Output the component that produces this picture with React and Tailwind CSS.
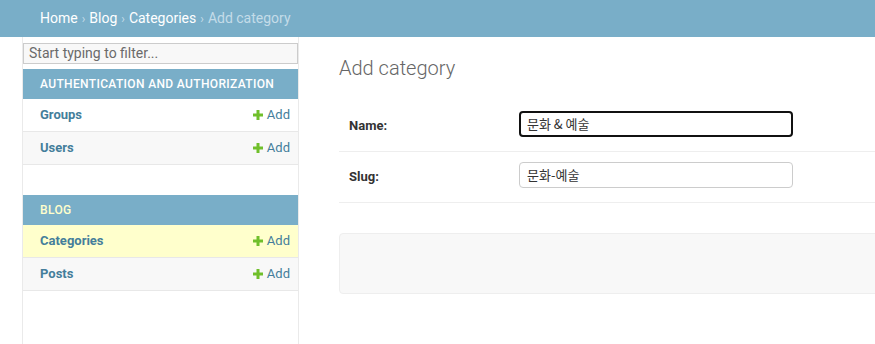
import React from 'react';

const font = { fontFamily: 'Roboto, "Noto Sans", "Liberation Sans", sans-serif' };

function PlusIcon() {
  return (
    <svg width="10" height="10" viewBox="0 0 10 10" className="mr-[4px]">
      <rect x="3.5" y="0" width="3" height="10" fill="#70bf2b" />
      <rect x="0" y="3.5" width="10" height="3" fill="#70bf2b" />
    </svg>
  );
}

function ModelRow({ name, current, odd }) {
  const bg = current ? 'bg-[#ffffcc]' : odd ? 'bg-white' : 'bg-[#f8f8f8]';
  return (
    <div className={`flex h-[33px] items-center justify-between border-b border-[#e8e8e8] pl-[17px] pr-[8px] ${bg}`}>
      <span className="text-[13px] font-bold text-[#447e9b]">{name}</span>
      <span className="flex items-center text-[13px] text-[#447e9b]">
        <PlusIcon />
        Add
      </span>
    </div>
  );
}

function AppModule({ title, models, titleColor }) {
  return (
    <div className="mb-[30px]">
      <div className={`flex h-[30px] items-center bg-[#79aec8] pl-[17px] text-[12px] font-medium uppercase tracking-[0.35px] ${titleColor}`}>
        {title}
      </div>
      {models.map((m, i) => (
        <ModelRow key={m.name} name={m.name} current={m.current} odd={i % 2 === 0} />
      ))}
    </div>
  );
}

function FormRow({ label, value, focused }) {
  return (
    <div className="flex h-[51px] items-center border-b border-[#eeeeee] pl-[10px]">
      <label className="w-[170px] text-[13px] font-bold text-[#333333]">{label}</label>
      <div
        className={`mb-[4px] flex h-[26px] w-[274px] items-center rounded-[4px] bg-white text-[13px] text-[#333333] ${
          focused ? 'border-2 border-[#111111] pl-[6px]' : 'border border-[#cccccc] pl-[7px]'
        }`}
        style={{ fontFamily: '"Noto Sans CJK KR", "Noto Sans", sans-serif' }}
      >
        {value}
      </div>
    </div>
  );
}

export default function App() {
  return (
    <div className="flex min-h-screen flex-col bg-white" style={font}>
      <div className="flex h-[37px] shrink-0 items-center bg-[#79aec8] pl-[40px] text-[14px] text-white">
        <span>Home</span>
        <span className="mx-[4px] text-[12px] text-[#c4dce8]">›</span>
        <span>Blog</span>
        <span className="mx-[4px] text-[12px] text-[#c4dce8]">›</span>
        <span>Categories</span>
        <span className="mx-[4px] text-[12px] text-[#c4dce8]">›</span>
        <span className="text-[#c4dce8]">Add category</span>
      </div>

      <div className="flex flex-1">
        {/* collapsed toggle strip of the nav sidebar */}
        <div className="w-[23px] shrink-0 border-r border-[#eaeaea]" />

        <nav className="w-[276px] shrink-0 border-r border-[#eaeaea] pt-[6px]">
          <div className="mb-[5px] flex h-[21px] items-center border border-[#cccccc] bg-[#f8f8f8] pl-[5px] text-[14px] text-[#6a6a6a]">
            Start typing to filter...
          </div>
          <AppModule
            title="Authentication and Authorization"
            titleColor="text-white"
            models={[{ name: 'Groups' }, { name: 'Users' }]}
          />
          <AppModule
            title="Blog"
            titleColor="text-[#ffffcc] font-bold"
            models={[{ name: 'Categories', current: true }, { name: 'Posts' }]}
          />
        </nav>

        <main className="flex-1 overflow-hidden pl-[40px] pt-[19px]">
          <div className="mr-[-20px]">
            <h1 className="mb-[21px] text-[20px] font-light leading-[24px] text-[#666666]">Add category</h1>
            <div>
              <FormRow label="Name:" value="문화 & 예술" focused />
              <FormRow label="Slug:" value="문화-예술" />
            </div>
            <div className="mt-[30px] h-[61px] rounded-[4px] border border-[#eeeeee] bg-[#f8f8f8]" />
          </div>
        </main>
      </div>
    </div>
  );
}
